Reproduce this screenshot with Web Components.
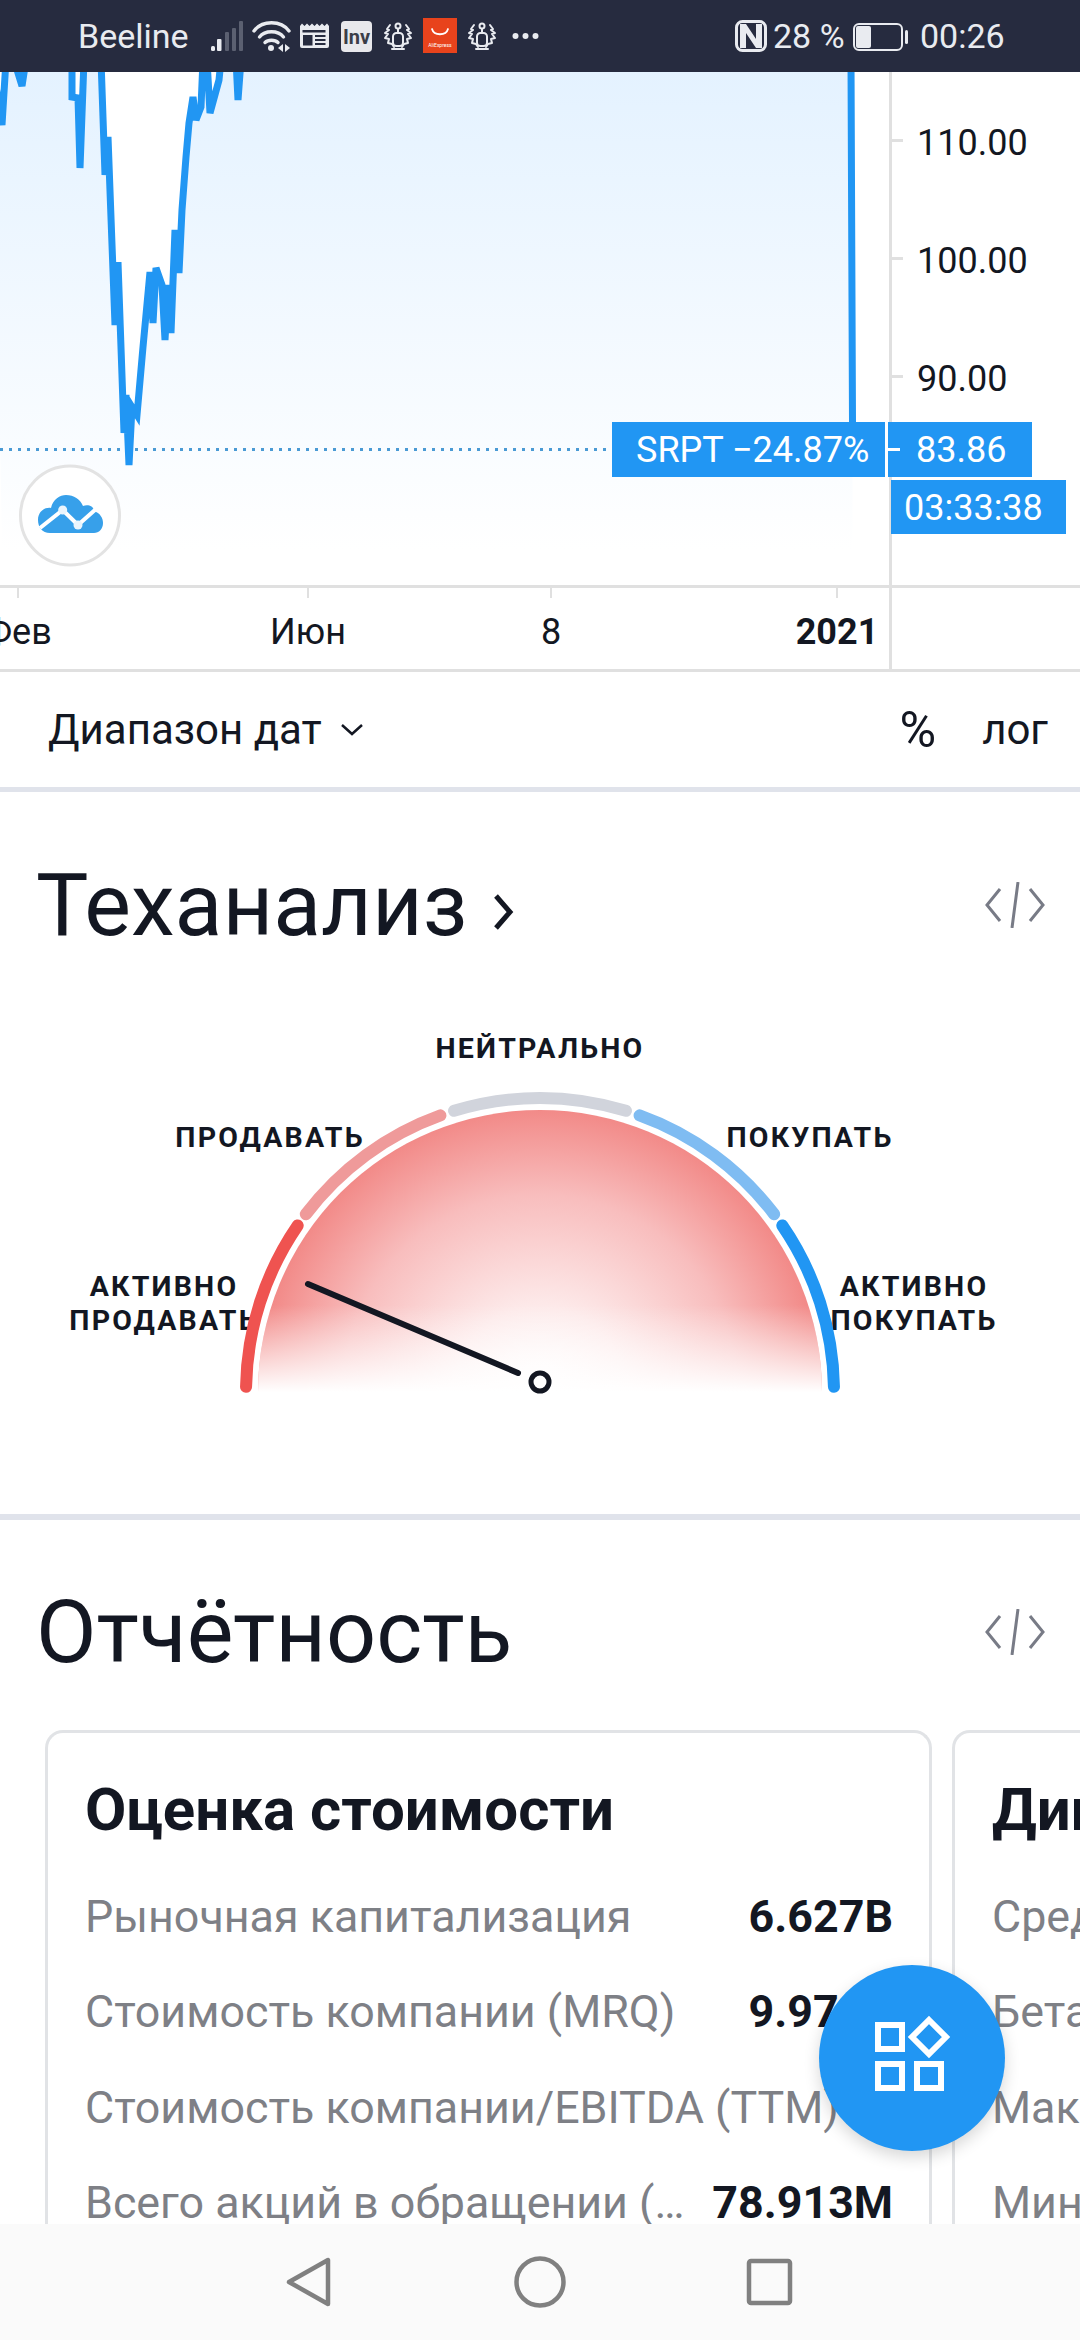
<!DOCTYPE html>
<html lang="ru"><head><meta charset="utf-8"><title>SRPT</title>
<style>
html,body{margin:0;padding:0;background:#fff}
body{width:1080px;height:2340px;overflow:hidden;position:relative;display:flex;flex-direction:column;font-family:Roboto,"Noto Sans",sans-serif;color:#131722}
report-section{flex:1;min-height:0}
</style></head><body>
<template id="t-status"><style>
:host{display:flex;align-items:center;height:72px;background:#262b3f;color:#e9ebf0;font:400 34px Roboto,sans-serif;flex:none;position:relative}
svg{position:absolute;left:0;top:0}
.t{position:absolute;top:17px;line-height:38px}
</style>
<span class="t" style="left:78px">Beeline</span>
<svg width="1080" height="72" viewBox="0 0 1080 72" aria-hidden="true">
<g fill="#5b6071"><rect x="225" y="32" width="4" height="19" rx="1"/><rect x="232" y="28" width="4" height="23" rx="1"/><rect x="239" y="21" width="4" height="30" rx="1"/></g>
<g fill="#e9ebf0"><rect x="211" y="46" width="4" height="5" rx="1.5"/><rect x="217" y="39" width="4.5" height="12" rx="1"/></g>
<g fill="none" stroke="#e9ebf0" stroke-width="3.4" stroke-linecap="round"><path d="M254 31C262 20 281 20 289 31"/><path d="M259.500 37C265 30 278 30 283.500 37"/><path d="M265 42.500C268 39.500 275 39.500 278 42.500"/></g>
<circle cx="271" cy="48" r="3" fill="#e9ebf0"/><path d="M283 44v8l-5-4zM285 44v8l5-4z" fill="#e9ebf0"/>
<path fill="#e9ebf0" d="M300 26l2-2.500 2.500 2.500 2.500-2.500 2.500 2.500 2.500-2.500 2.500 2.500 2.500-2.500 2.500 2.500 2.500-2.500 2.500 2.500 2.500-2.500 2 2.500V46a2 2 0 0 1-2 2H302a2 2 0 0 1-2-2z"/>
<g fill="#262b3f"><rect x="302.500" y="30" width="23" height="2.500"/><rect x="303" y="35" width="9.500" height="10.500"/><rect x="315" y="35" width="10.500" height="2"/><rect x="315" y="39" width="10.500" height="2"/><rect x="315" y="43" width="10.500" height="2"/></g>
<rect x="341" y="21" width="31" height="31" rx="4" fill="#e8e8ec"/>
<g fill="none" stroke="#e9ebf0" stroke-width="2" stroke-linecap="round" stroke-linejoin="round">
<rect x="393" y="33" width="10" height="13" rx="3.500"/><circle cx="398" cy="26" r="2.500"/><path d="M398 29v3"/><path d="M392 49h12"/><path d="M390 25l-3 4 2 1-4 3 3 1-3 4 4 1-1 4 4 1 2 3"/><path d="M406 25l3 4-2 1 4 3-3 1 3 4-4 1 1 4-4 1-2 3"/>
</g>
<rect x="423" y="18" width="34" height="35" fill="#e8431c"/>
<path d="M432 29c2 7 14 7 16 0" fill="none" stroke="#fff" stroke-width="1.800" stroke-linecap="round"/>
<g fill="none" stroke="#e9ebf0" stroke-width="2" stroke-linecap="round" stroke-linejoin="round" transform="translate(84,0)">
<rect x="393" y="33" width="10" height="13" rx="3.500"/><circle cx="398" cy="26" r="2.500"/><path d="M398 29v3"/><path d="M392 49h12"/><path d="M390 25l-3 4 2 1-4 3 3 1-3 4 4 1-1 4 4 1 2 3"/><path d="M406 25l3 4-2 1 4 3-3 1 3 4-4 1 1 4-4 1-2 3"/>
</g>
<g fill="#e9ebf0"><circle cx="515.500" cy="36" r="3"/><circle cx="525.500" cy="36" r="3"/><circle cx="535.500" cy="36" r="3"/></g>
<rect x="736.500" y="21.500" width="29" height="29" rx="6" fill="none" stroke="#e9ebf0" stroke-width="3"/>
<path fill="#e9ebf0" d="M740 24h6l10 15V24h6v24h-6L746 33v15h-6z"/>
<rect x="854" y="24" width="48" height="26" rx="5" fill="none" stroke="#e9ebf0" stroke-width="2"/>
<rect x="856" y="26" width="15" height="22" rx="2" fill="#e9ebf0"/>
<rect x="905" y="30" width="3" height="14" rx="1.500" fill="#e9ebf0"/>
<text x="440" y="47" text-anchor="middle" font-family="Roboto,sans-serif" font-size="5" fill="#fff">AliExpress</text>
<text x="356.500" y="43.500" text-anchor="middle" font-family="Roboto,sans-serif" font-size="20" font-weight="700" fill="#3b3d48">Inv</text>
</svg>
<span class="t" style="left:773px">28 %</span>
<span class="t" style="left:920px">00:26</span>
</template>

<template id="t-chart"><style>
:host{display:block;height:600px;flex:none;position:relative;overflow:hidden;background:#fff}
svg{display:block;position:absolute;left:0;top:0}
text{font-family:Roboto,sans-serif;font-size:36px;fill:#131722}
.w{fill:#fff}
</style>
<svg width="1080" height="600" viewBox="0 72 1080 600">
<defs><linearGradient id="g" gradientUnits="userSpaceOnUse" x1="0" y1="72" x2="0" y2="550"><stop offset="0" stop-color="#e4f2ff"/><stop offset="1" stop-color="#fff"/></linearGradient></defs>
<path id="area" fill="url(#g)"/>
<path d="M0 449.500H612" stroke="#4a9ad4" stroke-width="3" stroke-dasharray="3 6" fill="none"/>
<path id="line" fill="none" stroke="#2196f3" stroke-width="7" stroke-miterlimit="4"/>
<g fill="#e0e0e0">
<rect x="889" y="72" width="3" height="598"/>
<rect x="890" y="139" width="13" height="3"/><rect x="890" y="257" width="13" height="3"/><rect x="890" y="375" width="13" height="3"/>
<rect x="0" y="585" width="1080" height="3"/>
<rect x="17" y="588" width="2" height="10"/><rect x="307" y="588" width="2" height="10"/><rect x="550" y="588" width="2" height="10"/><rect x="836" y="588" width="2" height="10"/>
<rect x="0" y="669" width="1080" height="3"/>
</g>
<text x="917" y="154.500">110.00</text><text x="917" y="272.500">100.00</text><text x="917" y="390.500">90.00</text>
<rect x="612" y="422" width="273" height="55" fill="#2196f3"/>
<rect x="888" y="422" width="144" height="55" fill="#2196f3"/>
<rect x="888" y="448" width="12" height="3" fill="#fff"/>
<rect x="891" y="480" width="175" height="54" fill="#2196f3"/>
<text class="w" x="636" y="462">SRPT −24.87%</text>
<text class="w" x="916" y="462">83.86</text>
<text class="w" x="904" y="519.500">03:33:38</text>
<circle cx="70" cy="515.500" r="49.500" fill="#fff" stroke="#e3e3e3" stroke-width="3"/>
<path fill="#37a0ea" d="M50 533C42 533 38 527 38 520C38 512 44 507 51 508C53 499 60 495 66 495C74 495 80 499 83 506C89 504 94 507 94 511C100 513 103 518 103 523C103 529 99 533 94 533Z"/>
<path d="M40 528L62.700 510L78 525L96 509" fill="none" stroke="#fff" stroke-width="4"/>
<circle cx="62.700" cy="510" r="4.500" fill="#eaf5fd"/>
<circle cx="78" cy="525" r="4.500" fill="#eaf5fd"/>
<text x="18" y="644" text-anchor="middle">Фев</text>
<text x="308" y="644" text-anchor="middle">Июн</text>
<text x="551" y="644" text-anchor="middle">8</text>
<text x="837" y="644" text-anchor="middle" style="font-weight:700">2021</text>
</svg>
</template>

<template id="t-toolbar"><style>
:host{display:flex;align-items:center;height:115px;flex:none;padding:0 32px 0 48px;border-bottom:5px solid #e0e3eb;font:400 42px Roboto,sans-serif;color:#131722;box-sizing:content-box}
.l{display:flex;align-items:center;gap:18px;flex:1}
.p{margin-right:46px;font-size:50px}
svg{display:block}
</style>
<div class="l"><span>Диапазон дат</span><svg width="24" height="13" viewBox="0 0 24 13"><path d="M2 2l10 9 10-9" fill="none" stroke="#131722" stroke-width="2.500"/></svg></div>
<span class="p">%</span><span>лог</span>
</template>

<template id="t-head"><style>
:host{display:flex;align-items:center;height:100px;padding:0 35px 0 36px}
.h{font:400 88px/100px Roboto,sans-serif;color:#131722;white-space:nowrap}
.c{display:flex;align-items:center;margin-left:26px;flex:1}
svg{display:block}
.code{margin-left:auto}
</style>
<span class="h"><slot></slot></span><div class="c"><slot name="after"></slot></div>
<svg class="code" width="60" height="46" viewBox="0 0 60 46"><path d="M15 7L2 23l13 16M45 7l13 16-13 16M33 0L27 46" fill="none" stroke="#787b86" stroke-width="3"/></svg>
</template>

<template id="t-gauge"><style>
:host{display:block;position:relative;height:559px;flex:none}
svg{position:absolute;left:0;top:0}
.lb{position:absolute;font:700 28.500px/34px Roboto,sans-serif;color:#131722;text-align:center;white-space:nowrap;letter-spacing:2.200px;transform:translateX(-50%)}
</style>
<div class="lb" style="left:540px;top:77px">НЕЙТРАЛЬНО</div>
<div class="lb" style="left:270px;top:166px">ПРОДАВАТЬ</div>
<div class="lb" style="left:810px;top:166px">ПОКУПАТЬ</div>
<div class="lb" style="left:164px;top:315px">АКТИВНО<br>ПРОДАВАТЬ</div>
<div class="lb" style="left:914px;top:315px">АКТИВНО<br>ПОКУПАТЬ</div>
<svg width="1080" height="559" viewBox="0 955 1080 559">
<defs>
<radialGradient id="r" gradientUnits="userSpaceOnUse" cx="540" cy="1392" r="282"><stop offset="0" stop-color="#fff"/><stop offset=".3" stop-color="#fdeaea"/><stop offset=".7" stop-color="#f8bdbd"/><stop offset="1" stop-color="#f28a88"/></radialGradient>
<linearGradient id="f" gradientUnits="userSpaceOnUse" x1="0" y1="1392" x2="0" y2="1305"><stop offset="0" stop-color="#fff"/><stop offset="1" stop-color="#fff" stop-opacity="0"/></linearGradient>
</defs>
<path d="M258 1392A282 282 0 0 1 822 1392Z" fill="url(#r)"/>
<path d="M258 1392A282 282 0 0 1 822 1392Z" fill="url(#f)"/>
<g id="arcs" fill="none" stroke-width="12" stroke-linecap="round"></g>
<path d="M308 1284L518 1373" stroke="#131722" stroke-width="6" stroke-linecap="round"/>
<circle cx="540" cy="1382" r="9" fill="#fff" stroke="#131722" stroke-width="5"/>
</svg>
</template>

<template id="t-report"><style>
:host{display:block;overflow:hidden;position:relative}
.head{padding-top:62px;height:79px;padding-bottom:69px}
.cards{display:flex;gap:20px;padding-left:45px;width:2000px}
</style>
<div class="head"><slot name="head"></slot></div>
<div class="cards"><slot></slot></div>
</template>

<template id="t-card"><style>
:host{display:block;width:887px;box-sizing:border-box;border:3px solid #e1e3e6;border-bottom:0;border-radius:18px 18px 0 0;padding:43px 36px 0 37px;height:520px;flex:none}
h3{margin:0 0 25px;font:700 60px/68px Roboto,sans-serif;color:#131722;white-space:nowrap}
</style><h3><slot name="title"></slot></h3><slot></slot>
</template>

<template id="t-row"><style>
:host{display:flex;justify-content:space-between;align-items:center;height:95.500px;font:400 44.800px/50px Roboto,sans-serif;color:#7e8086;white-space:nowrap;gap:28px}
b{font-weight:700;color:#131722}
</style><span><slot></slot></span><b><slot name="v"></slot></b>
</template>

<template id="t-fab"><style>
:host{position:absolute;left:819px;top:1965px;width:186px;height:186px;border-radius:50%;background:#2196f3;box-shadow:0 6px 16px rgba(0,0,0,.16);display:flex;align-items:center;justify-content:center}
svg{display:block}
</style>
<svg width="186" height="186" viewBox="819 1965 186 186"><g fill="none" stroke="#fff" stroke-width="6"><rect x="878" y="2025" width="24" height="24"/><rect x="878" y="2064" width="24" height="24"/><rect x="917" y="2064" width="24" height="24"/><path d="M929 2020l17 17-17 17-17-17z"/></g></svg>
</template>

<template id="t-nav"><style>
:host{display:flex;align-items:center;justify-content:center;height:116px;background:#fafafa;flex:none;position:relative}
svg{display:block}
</style>
<svg width="1080" height="116" viewBox="0 2224 1080 116"><g fill="none" stroke="#808080" stroke-width="4.500" stroke-linejoin="round"><path d="M328 2260V2304L289 2282Z"/><circle cx="540" cy="2282" r="23.500"/><rect x="749" y="2261" width="41" height="42" rx="2"/></g></svg>
</template>

<status-bar></status-bar>
<price-chart></price-chart>
<chart-toolbar></chart-toolbar>
<tech-section>
  <section-head>Теханализ<svg slot="after" width="21" height="38" viewBox="0 0 21 38" style="display:block;transform:translateY(7px)"><path d="M3 3l14 16L3 35" fill="none" stroke="#131722" stroke-width="5"/></svg></section-head>
  <speed-gauge></speed-gauge>
</tech-section>
<report-section>
  <section-head slot="head">Отчётность</section-head>
  <stat-card>
    <span slot="title">Оценка стоимости</span>
    <stat-row>Рыночная капитализация<span slot="v">6.627B</span></stat-row>
    <stat-row>Стоимость компании (MRQ)<span slot="v">9.970B</span></stat-row>
    <stat-row>Стоимость компании/EBITDA (TTM)</stat-row>
    <stat-row>Всего акций в обращении (…<span slot="v">78.913M</span></stat-row>
  </stat-card>
  <stat-card>
    <span slot="title">Динамика цены</span>
    <stat-row>Средний объём (10 дн.)</stat-row>
    <stat-row>Бета (1 год)</stat-row>
    <stat-row>Макс. за 52 недели</stat-row>
    <stat-row>Мин. за 52 недели</stat-row>
  </stat-card>
</report-section>
<nav-bar></nav-bar>
<action-fab></action-fab>

<script>
function def(tag,tpl,init){
  customElements.define(tag,class extends HTMLElement{
    constructor(){super();const r=this.attachShadow({mode:'open'});r.appendChild(document.getElementById(tpl).content.cloneNode(true));if(init)init(r);}
  });
}
def('status-bar','t-status');
def('price-chart','t-chart',r=>{
  const p=[[-8,60],[2,125],[6,60],[14,60],[22,86],[26,60],[72,60],[72,97],[78,98],[80,168],[84,60],[101,60],[105,175],[108,137],[115,325],[118,262],[124,433],[126,395],[129,465],[132,407],[137,415],[143,347],[150,272],[153,323],[156,268],[162,285],[165,340],[168,285],[171,333],[175,230],[179,273],[182,210],[186,157],[189,123],[193,97],[196,120],[201,107],[203,60],[207,60],[210,113],[219,80],[221,60],[236,60],[238,100],[241,60],[851,60],[852.5,424]];
  const d=p.map((q,i)=>(i?'L':'M')+q[0]+' '+q[1]).join('');
  r.getElementById('line').setAttribute('d',d);
  r.getElementById('area').setAttribute('d',d+'L852.5 587L3 587Z');
});
def('chart-toolbar','t-toolbar');
def('section-head','t-head');
def('speed-gauge','t-gauge',r=>{
  const segs=[[1,34.5,'#ef5350'],[37.2,70.2,'#ef9a9a'],[73,107,'#d1d4dc'],[109.8,142.8,'#7fbcf2'],[145.5,179,'#2196f3']];
  const g=r.getElementById('arcs'),R=294,cx=540,cy=1392;
  const pt=a=>[cx-R*Math.cos(a*Math.PI/180),cy-R*Math.sin(a*Math.PI/180)];
  for(const [a,b,c] of segs){
    const s=pt(a),e=pt(b),el=document.createElementNS('http://www.w3.org/2000/svg','path');
    el.setAttribute('d',`M${s[0]} ${s[1]}A${R} ${R} 0 0 1 ${e[0]} ${e[1]}`);el.setAttribute('stroke',c);g.appendChild(el);
  }
});
customElements.define('tech-section',class extends HTMLElement{
  constructor(){super();this.attachShadow({mode:'open'}).innerHTML='<style>:host{display:block;height:728px;box-sizing:border-box;padding-top:63px;border-bottom:6px solid #e0e3eb;flex:none;overflow:hidden}</style><slot></slot>';}
});
def('report-section','t-report');
def('stat-card','t-card');
def('stat-row','t-row');
def('action-fab','t-fab');
def('nav-bar','t-nav');
</script>
</body></html>
